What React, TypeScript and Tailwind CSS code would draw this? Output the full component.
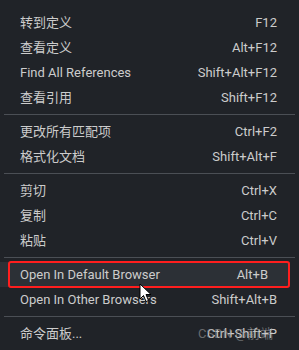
import React from "react";

type Item = { label: string; keys: string; active?: boolean } | "sep";

const items: Item[] = [
  { label: "转到定义", keys: "F12" },
  { label: "查看定义", keys: "Alt+F12" },
  { label: "Find All References", keys: "Shift+Alt+F12" },
  { label: "查看引用", keys: "Shift+F12" },
  "sep",
  { label: "更改所有匹配项", keys: "Ctrl+F2" },
  { label: "格式化文档", keys: "Shift+Alt+F" },
  "sep",
  { label: "剪切", keys: "Ctrl+X" },
  { label: "复制", keys: "Ctrl+C" },
  { label: "粘贴", keys: "Ctrl+V" },
  "sep",
  { label: "Open In Default Browser", keys: "Alt+B", active: true },
  { label: "Open In Other Browsers", keys: "Shift+Alt+B" },
  "sep",
  { label: "命令面板...", keys: "Ctrl+Shift+P" },
];

function Cursor() {
  return (
    <svg
      className="absolute left-[139px] top-[283px]"
      width="14"
      height="20"
      viewBox="0 0 14 20"
    >
      <path
        d="M1 1 L1 16 L4.5 12.5 L7 18.5 L9.5 17.5 L7 11.5 L12 11.5 Z"
        fill="#ffffff"
        stroke="#000000"
        strokeWidth="1"
        strokeLinejoin="round"
      />
    </svg>
  );
}

export default function App() {
  return (
    <div
      className="relative w-[299px] h-[350px] overflow-hidden bg-[#202328] text-[#cccccc] text-[13px]"
      style={{ fontFamily: 'Roboto, "Noto Sans CJK SC", sans-serif' }}
    >
      <div className="pt-[10px]">
        {items.map((item, i) =>
          item === "sep" ? (
            <div key={i} className="h-[9px] flex items-center px-[4px]">
              <div className="h-px w-full bg-[#4b4f55]" />
            </div>
          ) : (
            <div
              key={i}
              className={
                "relative h-[25px] flex items-center justify-between pl-[20px] pr-[22px] leading-none " +
                (item.active ? "bg-[#2c3036] mr-[9px]" : "")
              }
            >
              <span>{item.label}</span>
              <span className="relative">
                {item.keys}
                {item.label === "命令面板..." && (
                  <span className="absolute right-[4px] top-0 text-[#9a9a9a] opacity-60 whitespace-nowrap">
                    CSDN @前端
                  </span>
                )}
              </span>
              {item.active && (
                <div className="absolute left-[8px] right-0 top-[-1px] bottom-[-1px] border-2 border-[#ff1e1e] rounded-[3px]" />
              )}
            </div>
          )
        )}
      </div>
      <Cursor />
    </div>
  );
}
